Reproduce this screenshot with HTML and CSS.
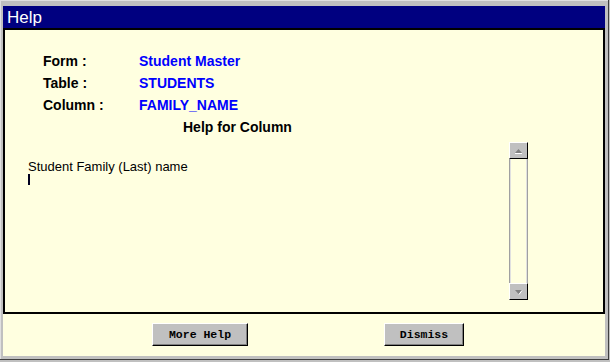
FILE: index.html
```html
<!DOCTYPE html>
<html lang="en">
<head>
  <meta charset="UTF-8">
  <title>Help</title>
  <link rel="stylesheet" href="styles.css">
</head>
<body>
  <div class="window">
    <div class="title-bar">Help</div>
    <div class="window-body">
      <div class="help-box">
        <div class="info-row"><span class="info-label">Form :</span><span class="info-value">Student Master</span></div>
        <div class="info-row"><span class="info-label">Table :</span><span class="info-value">STUDENTS</span></div>
        <div class="info-row"><span class="info-label">Column :</span><span class="info-value">FAMILY_NAME</span></div>
        <div class="help-heading">Help for Column</div>

        <div class="help-area">
          <div class="help-text">
            Student Family (Last) name
            <span class="caret"></span>
          </div>
          <div class="scrollbar">
            <div class="scroll-btn">
              <svg width="9" height="6" viewBox="0 0 9 6"><polygon points="4.5,1 8,5 1,5" fill="#808080"/><line x1="1" y1="5.5" x2="8" y2="5.5" stroke="#fff"/></svg>
            </div>
            <div class="scroll-track"></div>
            <div class="scroll-btn">
              <svg width="9" height="6" viewBox="0 0 9 6"><polygon points="1,1 8,1 4.5,5" fill="#808080"/><line x1="5" y1="5.5" x2="8" y2="1.5" stroke="#fff"/></svg>
            </div>
          </div>
        </div>
      </div>

      <div class="button-row">
        <div class="btn btn-more">More Help</div>
        <div class="btn btn-dismiss">Dismiss</div>
      </div>
    </div>
  </div>
</body>
</html>
```

FILE: styles.css
```css
body {
  margin: 0;
  background: #c0c0c0;
  font-family: "Liberation Sans", Arial, sans-serif;
}

.window {
  width: 609px;
  height: 360px;
  box-sizing: border-box;
  padding: 6px 3px 3px 3px;
  background: #c0c0c0;
  border-right: 1px solid #404040;
  border-bottom: 1px solid #404040;
  box-shadow: inset 1px 1px 0 #e0e0e0;
  display: flex;
  flex-direction: column;
}

.title-bar {
  height: 22px;
  box-sizing: border-box;
  padding: 1px 0 0 4px;
  line-height: 21px;
  background: #000080;
  color: #fff;
  font-size: 17px;
}

.window-body {
  flex: 1;
  background: #ffffe0;
  display: flex;
  flex-direction: column;
}

.help-box {
  height: 286px;
  box-sizing: border-box;
  border: 2px solid #000;
  padding-top: 20px;
}

.info-row {
  display: flex;
  padding-left: 38px;
  line-height: 22px;
  font-size: 14px;
  font-weight: bold;
}

.info-label {
  width: 96px;
  color: #000;
}

.info-value {
  color: #0000ff;
}

.help-heading {
  padding-left: 178px;
  line-height: 22px;
  font-size: 14px;
  font-weight: bold;
}

.help-area {
  display: flex;
  margin: 4px 0 0 21px;
  width: 502px;
  height: 158px;
}

.help-text {
  flex: 1;
  padding: 17px 0 0 2px;
  font-size: 13px;
  line-height: 15px;
  color: #000;
}

.caret {
  display: block;
  width: 2px;
  height: 11px;
  margin-top: 0;
  background: #000020;
}

.scrollbar {
  width: 19px;
  display: flex;
  flex-direction: column;
}

.scroll-btn {
  height: 17px;
  box-sizing: border-box;
  background: #c0c0c0;
  border-top: 1px solid #fff;
  border-left: 1px solid #fff;
  border-right: 1px solid #000;
  border-bottom: 1px solid #000;
  display: flex;
  align-items: center;
  justify-content: center;
}

.scroll-track {
  flex: 1;
  border-left: 1px solid #a0a0a0;
  border-right: 1px solid #a0a0a0;
  box-shadow: inset 1px 0 0 #e0e0e0, inset -1px 0 0 #e0e0e0;
}

.button-row {
  display: flex;
  padding: 9px 0 0 149px;
  gap: 136px;
}

.btn {
  height: 23px;
  box-sizing: border-box;
  background: #c0c0c0;
  border-top: 1px solid #fff;
  border-left: 1px solid #fff;
  border-right: 1px solid #000;
  border-bottom: 1px solid #000;
  box-shadow: inset -1px -1px 0 #808080;
  font-family: "Liberation Mono", "Courier New", monospace;
  font-weight: bold;
  font-size: 11.5px;
  line-height: 21px;
  text-align: center;
  color: #000;
}

.btn-more {
  width: 96px;
}

.btn-dismiss {
  width: 80px;
}
```
